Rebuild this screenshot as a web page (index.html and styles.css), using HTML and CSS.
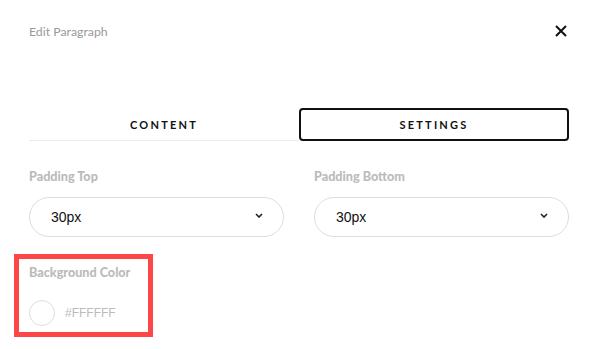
FILE: index.html
```html
<!DOCTYPE html>
<html lang="en">
<head>
    <meta charset="UTF-8">
    <meta name="viewport" content="width=device-width, initial-scale=1.0">
    <title>Edit Paragraph</title>
    <link rel="stylesheet" href="styles.css">
</head>
<body>

<div class="modal">
    <div class="modal-header">
        <span class="modal-title">Edit Paragraph</span>
        <svg class="close-icon" width="12" height="12" viewBox="0 0 12 12">
            <path d="M1 1 L11 11 M11 1 L1 11" stroke="#111" stroke-width="2" fill="none"/>
        </svg>
    </div>

    <div class="tabs">
        <div class="tab">CONTENT</div>
        <div class="tab tab-active">SETTINGS</div>
    </div>

    <div class="field-row">
        <div class="field">
            <label class="field-label">Padding Top</label>
            <div class="select">
                <span>30px</span>
                <svg width="8" height="5" viewBox="0 0 8 5">
                    <path d="M1 1 L4 4 L7 1" stroke="#222" stroke-width="1.6" fill="none"/>
                </svg>
            </div>
        </div>
        <div class="field">
            <label class="field-label">Padding Bottom</label>
            <div class="select">
                <span>30px</span>
                <svg width="8" height="5" viewBox="0 0 8 5">
                    <path d="M1 1 L4 4 L7 1" stroke="#222" stroke-width="1.6" fill="none"/>
                </svg>
            </div>
        </div>
    </div>

    <div class="color-field">
        <label class="field-label">Background Color</label>
        <div class="color-picker">
            <span class="swatch"></span>
            <span class="color-value">#FFFFFF</span>
        </div>
    </div>
</div>

</body>
</html>
```

FILE: styles.css
```css
body {
    margin: 0;
    background: #fff;
    font-family: Lato, "Open Sans", sans-serif;
    color: #111;
}

.modal {
    padding: 0 22px 0 29px;
}

.modal-header {
    display: flex;
    justify-content: space-between;
    align-items: center;
    padding-top: 24px;
    height: 16px;
}

.modal-title {
    font-size: 12.3px;
    line-height: 16px;
    color: #999;
}

.close-icon {
    margin-right: 2px;
    margin-top: -2px;
}

.tabs {
    display: grid;
    grid-template-columns: 1fr 1fr;
    margin-top: 68px;
}

.tab {
    box-sizing: border-box;
    height: 33px;
    display: flex;
    align-items: center;
    justify-content: center;
    font-size: 11px;
    font-weight: 700;
    letter-spacing: 2.2px;
    border-bottom: 1px solid #ececec;
}

.tab-active {
    border: 2px solid #111;
    border-radius: 4px;
}

.field-row {
    display: grid;
    grid-template-columns: 1fr 1fr;
    column-gap: 30px;
    margin-top: 28px;
}

.field-label {
    display: block;
    font-size: 12.6px;
    line-height: 16px;
    font-weight: 900;
    color: #bbb;
}

.select {
    box-sizing: border-box;
    height: 40px;
    margin-top: 12px;
    padding: 0 20px 0 21px;
    display: flex;
    align-items: center;
    justify-content: space-between;
    border: 1px solid #ddd;
    border-radius: 20px;
    font-family: "Liberation Sans", Arial, sans-serif;
    font-size: 14px;
}

.select svg {
    margin-top: -3px;
}

.color-field {
    box-sizing: border-box;
    width: 139px;
    margin: 17px 0 0 -15px;
    padding: 6px 10px 6px 10px;
    border: 5px solid #ff4646;
}

.color-picker {
    display: flex;
    align-items: center;
    margin-top: 19px;
}

.swatch {
    box-sizing: border-box;
    width: 26px;
    height: 26px;
    border: 1px solid #ddd;
    border-radius: 50%;
}

.color-value {
    margin-left: 10px;
    font-family: "Liberation Sans", Arial, sans-serif;
    font-size: 12px;
    color: #bbb;
}
```
